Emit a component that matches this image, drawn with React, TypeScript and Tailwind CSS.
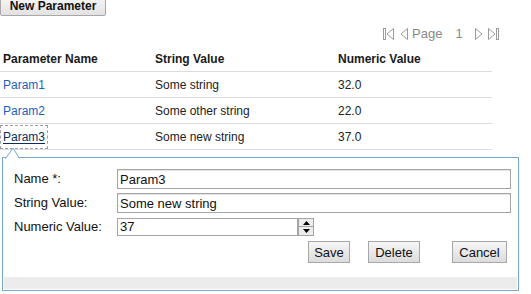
import React from "react";

const rows = [
  { name: "Param1", str: "Some string", num: "32.0" },
  { name: "Param2", str: "Some other string", num: "22.0" },
  { name: "Param3", str: "Some new string", num: "37.0" },
];

function FirstIcon() {
  return (
    <svg width="11" height="12" viewBox="0 0 11 12" className="block">
      <rect x="0.5" y="0.5" width="2" height="11" fill="none" stroke="#9a9a9a" strokeWidth="1" />
      <path d="M10.5 0.5 L4 6 L10.5 11.5 Z" fill="none" stroke="#9a9a9a" strokeWidth="1" />
    </svg>
  );
}
function PrevIcon() {
  return (
    <svg width="8" height="12" viewBox="0 0 8 12" className="block">
      <path d="M7.5 0.5 L1 6 L7.5 11.5 Z" fill="none" stroke="#9a9a9a" strokeWidth="1" />
    </svg>
  );
}
function NextIcon() {
  return (
    <svg width="8" height="12" viewBox="0 0 8 12" className="block">
      <path d="M0.5 0.5 L7 6 L0.5 11.5 Z" fill="none" stroke="#9a9a9a" strokeWidth="1" />
    </svg>
  );
}
function LastIcon() {
  return (
    <svg width="11" height="12" viewBox="0 0 11 12" className="block">
      <path d="M0.5 0.5 L7 6 L0.5 11.5 Z" fill="none" stroke="#9a9a9a" strokeWidth="1" />
      <rect x="8.5" y="0.5" width="2" height="11" fill="none" stroke="#9a9a9a" strokeWidth="1" />
    </svg>
  );
}

function Btn({ children, w }: { children: React.ReactNode; w: string }) {
  return (
    <button
      className={`${w} h-[22px] border border-[#a8a8a8] bg-gradient-to-b from-[#f6f6f6] to-[#dcdcdc] text-[13px] text-[#111] leading-none flex items-center justify-center`}
    >
      {children}
    </button>
  );
}

export default function App() {
  return (
    <div
      className="w-[531px] h-[294px] bg-white overflow-hidden text-[#222]"
      style={{ fontFamily: '"Liberation Sans", Arial, sans-serif' }}
    >
      <button className="-mt-[5px] block w-[106px] h-[21px] border border-[#a8a8a8] rounded-[2px] bg-gradient-to-b from-[#f8f8f8] to-[#e2e2e2] text-[12px] font-bold text-[#111] leading-none">
        New Parameter
      </button>

      <div className="h-[30px] pt-[5px] flex items-center pl-[383px] text-[13px] text-[#8a8a8a]">
        <FirstIcon />
        <span className="ml-[6px]"><PrevIcon /></span>
        <span className="ml-[4px]">Page</span>
        <span className="ml-[13px]">1</span>
        <span className="ml-[12px]"><NextIcon /></span>
        <span className="ml-[5px]"><LastIcon /></span>
      </div>

      <div className="w-[492px] text-[12px]">
        <div className="grid grid-cols-[152px_183px_157px] h-[26px] items-center border-b border-[#dcdcdc] font-bold text-[#1a1a1a]">
          <div className="pl-[3px]">Parameter Name</div>
          <div className="pl-[3px]">String Value</div>
          <div className="pl-[3px]">Numeric Value</div>
        </div>
        {rows.map((r, i) => (
          <div
            key={r.name}
            className="grid grid-cols-[152px_183px_157px] h-[26px] items-center border-b border-[#dcdcdc]"
          >
            <div className="pl-[3px]">
              {i === 2 ? (
                <span className="relative inline-block text-[#0b2e5e] underline underline-offset-[2px] outline outline-1 outline-dashed outline-[#a0a0a0] outline-offset-[2px]">
                  {r.name}
                </span>
              ) : (
                <span className="text-[#1d5fbf]">{r.name}</span>
              )}
            </div>
            <div className="pl-[3px]">{r.str}</div>
            <div className="pl-[3px]">{r.num}</div>
          </div>
        ))}
      </div>

      <div className="relative mt-[7px] ml-[2px] w-[517px] h-[134px] border border-[#76a9cc] bg-white flex flex-col">
        <svg
          className="absolute left-[-1px] top-[-11px]"
          width="20"
          height="12"
          viewBox="0 0 20 12"
        >
          <path d="M3.5 11.5 L11 1 L17.5 11.5" fill="white" stroke="#76a9cc" strokeWidth="1" />
          <rect x="4.5" y="11" width="12.5" height="2" fill="white" />
        </svg>
        <div className="flex-1 pl-[11px] pt-[11px] pr-[6px] text-[13px] text-[#111]">
          <div className="flex items-center h-[20px]">
            <div className="w-[103px]">Name *:</div>
            <input
              readOnly
              value="Param3"
              className="w-[394px] h-[20px] border border-[#a5a5a5] px-[2px] text-[13px] text-[#111] outline-none shadow-[inset_0_1px_1px_#e4e4e4]"
            />
          </div>
          <div className="flex items-center h-[20px] mt-[4px]">
            <div className="w-[103px]">String Value:</div>
            <input
              readOnly
              value="Some new string"
              className="w-[394px] h-[20px] border border-[#a5a5a5] px-[2px] text-[13px] text-[#111] outline-none shadow-[inset_0_1px_1px_#e4e4e4]"
            />
          </div>
          <div className="flex items-center h-[18px] mt-[5px]">
            <div className="w-[103px]">Numeric Value:</div>
            <input
              readOnly
              value="37"
              className="w-[181px] h-[18px] border border-[#a5a5a5] px-[2px] text-[13px] text-[#111] outline-none"
            />
            <div className="w-[16px] h-[18px] flex flex-col">
              <div className="h-[9px] border border-[#a5a5a5] bg-[#ececec] flex items-center justify-center">
                <svg width="7" height="4" viewBox="0 0 7 4" className="block"><path d="M0 4 L3.5 0 L7 4 Z" fill="#000" /></svg>
              </div>
              <div className="h-[9px] border border-t-0 border-[#a5a5a5] bg-[#ececec] flex items-center justify-center">
                <svg width="7" height="4" viewBox="0 0 7 4" className="block"><path d="M0 0 L7 0 L3.5 4 Z" fill="#000" /></svg>
              </div>
            </div>
          </div>
          <div className="flex mt-[5px] pl-[294px]">
            <Btn w="w-[42px]">Save</Btn>
            <div className="ml-[18px]"><Btn w="w-[52px]">Delete</Btn></div>
            <div className="ml-[32px]"><Btn w="w-[55px]">Cancel</Btn></div>
          </div>
        </div>
        <div className="h-[12px] mb-[1px] mx-[1px] bg-[#ececec]" />
      </div>
    </div>
  );
}
